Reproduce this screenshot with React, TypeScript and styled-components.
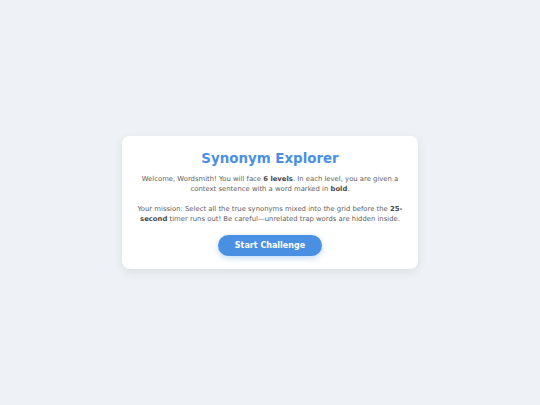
import React from "react";
import styled, { createGlobalStyle } from "styled-components";

const Global = createGlobalStyle`
  html, body { margin: 0; padding: 0; }
  body {
    background: #eef2f6;
    font-family: "DejaVu Sans", Verdana, sans-serif;
  }
`;

const Page = styled.div`
  width: 540px;
  height: 405px;
  display: flex;
  align-items: center;
  justify-content: center;
`;

const Card = styled.div`
  width: 296px;
  box-sizing: border-box;
  padding: 15px 13px 13px;
  background: #ffffff;
  border-radius: 8px;
  box-shadow: 0 3px 10px rgba(40, 60, 90, 0.1);
  display: flex;
  flex-direction: column;
  align-items: center;
  text-align: center;
`;

const Title = styled.h1`
  margin: 0;
  font-size: 13.4px;
  line-height: 16px;
  font-weight: 700;
  color: #4a90e2;
`;

const Text = styled.p`
  margin: 7px 0 0;
  font-size: 6.85px;
  line-height: 10px;
  color: #626262;
  & + & {
    margin-top: 10px;
  }
  b { color: #484848; }
`;

const Button = styled.button`
  margin-top: 11px;
  width: 104px;
  height: 21px;
  padding: 0;
  border: none;
  border-radius: 11px;
  background: #4a90e2;
  color: #fff;
  font-family: inherit;
  font-size: 8px;
  font-weight: 700;
  box-shadow: 0 2px 6px rgba(74, 144, 226, 0.35);
  cursor: pointer;
`;

export default function App() {
  return (
    <>
      <Global />
      <Page>
        <Card>
          <Title>Synonym Explorer</Title>
          <Text>
            Welcome, Wordsmith! You will face <b>6 levels</b>. In each level, you are given a
            context sentence with a word marked in <b>bold</b>.
          </Text>
          <Text>
            Your mission: Select all the true synonyms mixed into the grid before the{" "}
            <b>25-second</b> timer runs out! Be careful—unrelated trap words are hidden inside.
          </Text>
          <Button>Start Challenge</Button>
        </Card>
      </Page>
    </>
  );
}
